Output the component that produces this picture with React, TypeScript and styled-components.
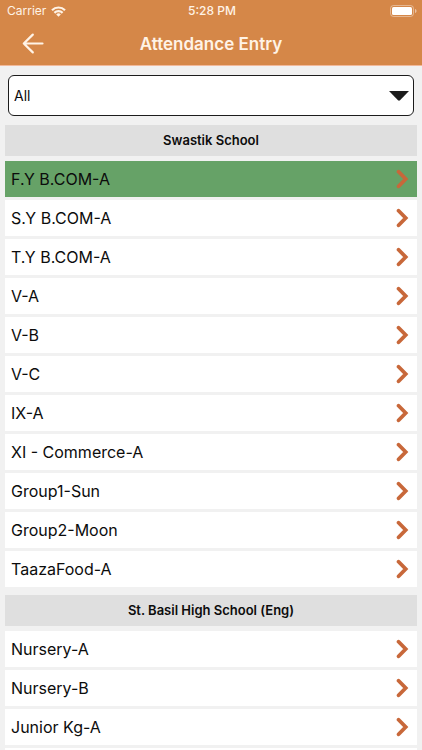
import React, { useState } from "react";
import styled, { createGlobalStyle } from "styled-components";

const GlobalStyle = createGlobalStyle`
  *, *::before, *::after { box-sizing: border-box; }
  body {
    margin: 0;
    background: #f1f1f1;
    font-family: Inter, "Liberation Sans", sans-serif;
    color: #0c0c0c;
  }
`;

const Screen = styled.div`
  height: 100vh;
  display: flex;
  flex-direction: column;
  overflow: hidden;
`;

const TopBar = styled.header`
  flex: none;
  background: #d58748;
  border-bottom: 1px solid #f2b99a;
  color: #fff3e6;
`;

const StatusBar = styled.div`
  display: grid;
  grid-template-columns: 1fr auto 1fr;
  align-items: center;
  height: 22px;
  padding: 0 5px 0 7px;
  font-size: 12px;
  line-height: 22px;
`;

const Carrier = styled.div`
  display: flex;
  align-items: center;
  gap: 5px;
`;

const Clock = styled.time`
  font-weight: 500;
`;

const BatteryIcon = styled.svg`
  justify-self: end;
`;

const NavBar = styled.div`
  display: grid;
  grid-template-columns: 44px 1fr 44px;
  align-items: center;
  height: 43px;
  padding: 0 11px;
`;

const BackButton = styled.button`
  display: flex;
  align-items: center;
  justify-content: center;
  height: 43px;
  padding: 0;
  border: 0;
  background: none;
  color: inherit;
  cursor: pointer;
`;

const Title = styled.h1`
  margin: 0;
  text-align: center;
  font-size: 17px;
  line-height: 24px;
  font-weight: 600;
`;

const Content = styled.main`
  flex: 1;
  min-height: 0;
  overflow-y: auto;
  scrollbar-width: none;
  padding: 9px 5px 0;
`;

const Filter = styled.div`
  display: grid;
  align-items: center;
  margin: 0 3px 9px;

  > * { grid-area: 1 / 1; }
`;

const Select = styled.select`
  appearance: none;
  width: 100%;
  height: 41px;
  padding: 0 32px 0 5px;
  border: 1px solid #1c1c1c;
  border-radius: 6px;
  background: #fff;
  color: inherit;
  font-family: inherit;
  font-size: 14px;
`;

const SelectArrow = styled.svg`
  justify-self: end;
  margin-right: 5px;
  pointer-events: none;
`;

const Group = styled.section`
  margin-bottom: 8px;
`;

const GroupTitle = styled.h2`
  margin: 0 0 5px;
  background: #dfdfdf;
  text-align: center;
  font-size: 13px;
  line-height: 31px;
  font-weight: 600;
`;

const Rows = styled.ul`
  display: flex;
  flex-direction: column;
  gap: 3px;
  margin: 0;
  padding: 0;
  list-style: none;
`;

const Row = styled.button<{ $selected: boolean }>`
  display: flex;
  align-items: center;
  justify-content: space-between;
  width: 100%;
  height: 36px;
  padding: 0 8px 0 6px;
  border: 0;
  background: ${(p) => (p.$selected ? "#66a267" : "#fff")};
  color: inherit;
  font-family: inherit;
  font-size: 16px;
  line-height: 20px;
  text-align: left;
  cursor: pointer;
`;

const groups = [
  {
    name: "Swastik School",
    classes: [
      "F.Y B.COM-A",
      "S.Y B.COM-A",
      "T.Y B.COM-A",
      "V-A",
      "V-B",
      "V-C",
      "IX-A",
      "XI - Commerce-A",
      "Group1-Sun",
      "Group2-Moon",
      "TaazaFood-A",
    ],
  },
  {
    name: "St. Basil High School (Eng)",
    classes: ["Nursery-A", "Nursery-B", "Junior Kg-A", "Junior Kg-B"],
  },
];

const Chevron = () => (
  <svg width="13" height="20" viewBox="0 0 13 20" fill="none" aria-hidden="true">
    <path d="M2.6 2.7 9.7 10l-7.1 7.3" stroke="#c8683a" strokeWidth="3.8" strokeLinecap="round" strokeLinejoin="miter" />
  </svg>
);

export default function App() {
  const [selected, setSelected] = useState("F.Y B.COM-A");
  const [filter, setFilter] = useState("All");

  return (
    <Screen>
      <GlobalStyle />
      <TopBar>
        <StatusBar>
          <Carrier>
            Carrier
            <svg width="15" height="11" viewBox="0 0 15 11" fill="none" stroke="currentColor" strokeWidth="2.2" aria-label="Wi-Fi">
              <path d="M1 4.2a9.2 9.2 0 0 1 13 0" />
              <path d="M3.4 6.9a5.8 5.8 0 0 1 8.2 0" />
              <path d="M7.5 10.8 5.2 8.5a3.2 3.2 0 0 1 4.6 0Z" fill="currentColor" stroke="none" />
            </svg>
          </Carrier>
          <Clock>5:28 PM</Clock>
          <BatteryIcon width="27" height="12" viewBox="0 0 27 12" aria-label="Battery full">
            <rect x="0.5" y="0.5" width="23" height="11" rx="3" fill="none" stroke="#fff" strokeOpacity="0.4" />
            <rect x="2" y="2" width="20" height="8" rx="1.5" fill="#fff" />
            <path d="M25 4c2 .6 2 3.4 0 4Z" fill="#fff" fillOpacity="0.5" />
          </BatteryIcon>
        </StatusBar>
        <NavBar>
          <BackButton aria-label="Back">
            <svg width="22" height="22" viewBox="0 0 22 22" fill="none" stroke="currentColor" strokeWidth="2.2" strokeLinecap="round" strokeLinejoin="round" aria-hidden="true">
              <path d="M20.5 10.5H1.8M10.8 1.6l-9 8.9 9 8.9" />
            </svg>
          </BackButton>
          <Title>Attendance Entry</Title>
        </NavBar>
      </TopBar>
      <Content>
        <Filter>
          <Select aria-label="School" value={filter} onChange={(e) => setFilter(e.target.value)}>
            <option>All</option>
            {groups.map((g) => (
              <option key={g.name}>{g.name}</option>
            ))}
          </Select>
          <SelectArrow width="20" height="10" viewBox="0 0 20 10" aria-hidden="true">
            <path d="M0 0h20l-9 9.3q-1 .9-2 0Z" fill="#1c1c1c" />
          </SelectArrow>
        </Filter>
        {groups
          .filter((g) => filter === "All" || g.name === filter)
          .map((g) => (
            <Group key={g.name}>
              <GroupTitle>{g.name}</GroupTitle>
              <Rows>
                {g.classes.map((c) => (
                  <li key={c}>
                    <Row $selected={c === selected} onClick={() => setSelected(c)}>
                      {c}
                      <Chevron />
                    </Row>
                  </li>
                ))}
              </Rows>
            </Group>
          ))}
      </Content>
    </Screen>
  );
}
